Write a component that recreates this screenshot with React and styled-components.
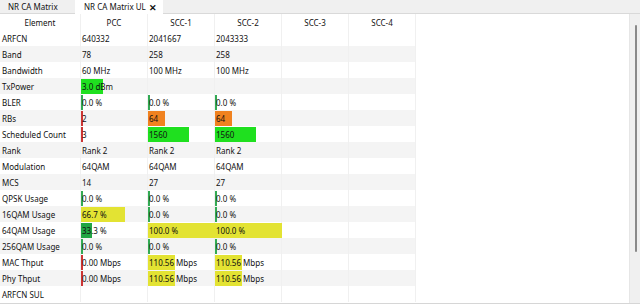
import React from "react";
import styled, { createGlobalStyle } from "styled-components";

const Global = createGlobalStyle`
  html, body { margin: 0; padding: 0; background: #ffffff; }
  body { font-family: "Noto Sans", "Open Sans", sans-serif; color: #111; }
  * { box-sizing: border-box; }
`;

const Window = styled.div`
  width: 640px;
  height: 304px;
  display: flex;
  flex-direction: column;
  overflow: hidden;
  background: #ffffff;
`;

const TabBar = styled.div`
  height: 14px;
  flex-shrink: 0;
  display: flex;
  align-items: stretch;
  background: #f0f0f0;
  border-bottom: 1px solid #d9d9d9;
`;

const Tab = styled.div`
  display: flex;
  align-items: center;
  flex-shrink: 0;
  white-space: nowrap;
  width: ${(p) => p.$w}px;
  padding-left: ${(p) => (p.$active ? "9px" : "8px")};
  font-size: 8px;
  line-height: 1;
  color: #111;
  background: ${(p) => (p.$active ? "#ffffff" : "#f0f0f0")};
  margin-bottom: ${(p) => (p.$active ? "-1px" : "0")};
`;

const CloseX = styled.span`
  font-size: 9px;
  font-weight: 700;
  line-height: 1;
  margin-left: 3px;
`;

const Body = styled.div`
  flex: 1;
  display: flex;
  min-height: 0;
  border-bottom: 1px solid #d6d6d6;
`;

const TableArea = styled.div`
  flex: 1;
  background: #ffffff;
`;

const Grid = styled.div`
  display: grid;
  grid-template-columns: 81px repeat(5, 67px);
  grid-auto-rows: 16px;
  width: 416px;
`;

const HeadCell = styled.div`
  font-size: 8px;
  display: flex;
  align-items: center;
  justify-content: center;
  border-right: 1px solid #f0f0f0;
  background: #ffffff;
`;

const Cell = styled.div`
  position: relative;
  font-size: 8px;
  display: flex;
  align-items: center;
  padding-left: ${(p) => (p.$first ? "2px" : "1px")};
  white-space: nowrap;
  background: ${(p) => (p.$alt ? "#f4f4f4" : "#ffffff")};
  border-right: 1px solid #f0f0f0;
`;

const Bar = styled.div`
  position: absolute;
  left: 0;
  top: 1px;
  bottom: 0;
  background: ${(p) => p.$color};
`;

const CellText = styled.span`
  position: relative;
`;

const ScrollTrack = styled.div`
  width: 11px;
  background: #f0f0f0;
  border-left: 1px solid #e6e6e6;
  display: flex;
  justify-content: center;
  padding-top: 11px;
`;

const Thumb = styled.div`
  width: 2px;
  height: 227px;
  background: #8a8a8a;
  border-radius: 1px;
  margin-left: 1px;
`;

const GREEN = "#1fe01f";
const LINE_G = "#33aa55";
const RED = "#cc3535";
const ORANGE = "#f0821f";
const YELLOW = "#e3e333";
const DGREEN = "#22a544";

const line = (text, color) => ({ text, bar: { w: 2, color } });
const bar = (text, w, color) => ({ text, bar: { w, color } });

const headers = ["Element", "PCC", "SCC-1", "SCC-2", "SCC-3", "SCC-4"];

const rows = [
  ["ARFCN", "640332", "2041667", "2043333"],
  ["Band", "78", "258", "258"],
  ["Bandwidth", "60 MHz", "100 MHz", "100 MHz"],
  ["TxPower", bar("3.0 dBm", 22, GREEN), "", ""],
  ["BLER", line("0.0 %", LINE_G), line("0.0 %", LINE_G), line("0.0 %", LINE_G)],
  ["RBs", line("2", RED), bar("64", 17, ORANGE), bar("64", 17, ORANGE)],
  ["Scheduled Count", line("3", RED), bar("1560", 41, GREEN), bar("1560", 41, GREEN)],
  ["Rank", "Rank 2", "Rank 2", "Rank 2"],
  ["Modulation", "64QAM", "64QAM", "64QAM"],
  ["MCS", "14", "27", "27"],
  ["QPSK Usage", line("0.0 %", LINE_G), line("0.0 %", LINE_G), line("0.0 %", LINE_G)],
  ["16QAM Usage", bar("66.7 %", 44, YELLOW), line("0.0 %", LINE_G), line("0.0 %", LINE_G)],
  ["64QAM Usage", bar("33.3 %", 11, DGREEN), bar("100.0 %", 67, YELLOW), bar("100.0 %", 67, YELLOW)],
  ["256QAM Usage", line("0.0 %", LINE_G), line("0.0 %", LINE_G), line("0.0 %", LINE_G)],
  ["MAC Thput", line("0.00 Mbps", RED), bar("110.56 Mbps", 27, YELLOW), bar("110.56 Mbps", 27, YELLOW)],
  ["Phy Thput", line("0.00 Mbps", RED), bar("110.56 Mbps", 27, YELLOW), bar("110.56 Mbps", 27, YELLOW)],
  ["ARFCN SUL", "", "", ""],
];

function DataCell({ value, alt }) {
  const v = typeof value === "string" ? { text: value } : value;
  return (
    <Cell $alt={alt}>
      {v.bar && <Bar $color={v.bar.color} style={{ width: v.bar.w }} />}
      <CellText>{v.text}</CellText>
    </Cell>
  );
}

export default function App() {
  return (
    <>
      <Global />
      <Window>
        <TabBar>
          <Tab $w={75}>NR CA Matrix</Tab>
          <Tab $w={88} $active>
            NR CA Matrix UL<CloseX>✕</CloseX>
          </Tab>
        </TabBar>
        <Body>
          <TableArea>
            <Grid>
              {headers.map((h) => (
                <HeadCell key={h}>{h}</HeadCell>
              ))}
              {rows.map((r, i) => {
                const alt = i % 2 === 1;
                return (
                  <React.Fragment key={r[0]}>
                    <Cell $first $alt={alt}>
                      <CellText>{r[0]}</CellText>
                    </Cell>
                    <DataCell value={r[1]} alt={alt} />
                    <DataCell value={r[2]} alt={alt} />
                    <DataCell value={r[3]} alt={alt} />
                    <DataCell value="" alt={alt} />
                    <DataCell value="" alt={alt} />
                  </React.Fragment>
                );
              })}
            </Grid>
          </TableArea>
          <ScrollTrack>
            <Thumb />
          </ScrollTrack>
        </Body>
      </Window>
    </>
  );
}
